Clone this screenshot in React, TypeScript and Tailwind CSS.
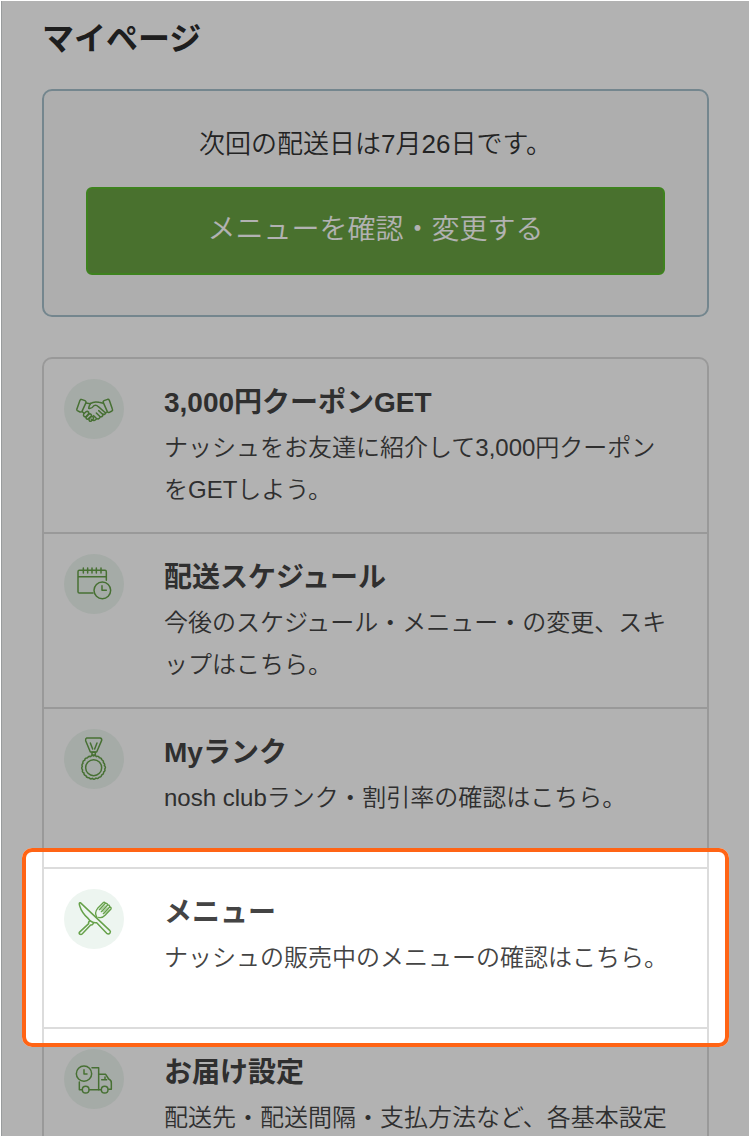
import type { ReactNode } from "react";

function Icon({ children }: { children: ReactNode }) {
  return (
    <svg
      viewBox="0 0 180 180"
      className="size-[60px] shrink-0 rounded-full bg-[#edf5f0]"
      fill="none"
      stroke="#66a14a"
      strokeWidth="4.5"
      strokeLinecap="round"
      strokeLinejoin="round"
      aria-hidden="true"
    >
      {children}
    </svg>
  );
}

const handshake = (
  <Icon>
    <path d="M52 61 L63 65 Q67 67 66 71 L54 97 Q52 100 48 99 L40 95 Q37 93 39 89 L48 64 Q50 60 52 61Z" />
    <path d="M131 61 L120 65 Q116 67 118 71 L130 98 Q132 102 136 100 L144 96 Q147 94 145 90 L136 64 Q134 60 131 61Z" />
    <path d="M66 72 L79 74 Q90 66 105 70 L118 73" />
    <path d="M80 73 Q74 82 74 88 Q82 91 90 80 Q97 77 103 83 L125 102 Q122 109 115 105 L104 95" />
    <path d="M117 106 Q116 116 107 112 L97 102" />
    <path d="M109 113 Q105 123 97 118 L89 110" />
    <path d="M55 98 L60 103 M127 100 L124 103 M98 119 Q91 129 82 121" />
    <path d="M66 98 L59 105 Q57 110 61 113 Q65 115 68 111 L74 104 Q75 98 70 97Z" />
    <path d="M76 104 L66 115 Q66 121 71 121 L82 111 Q84 105 76 104Z" />
    <path d="M83 112 L75 120 Q75 128 81 127 L88 120 Q90 112 83 112Z" />
  </Icon>
);

const calendar = (
  <Icon>
    <path d="M87 117 H46 Q42 117 42 113 V53 Q42 49 46 49 H123 Q127 49 127 53 V79 M42 68 H127" />
    <path d="M58 42 V57 M71 42 V57 M84 42 V57 M97 42 V57 M111 42 V57" />
    <circle cx="115" cy="109" r="25" />
    <path d="M114 95 V109 H127" />
  </Icon>
);

const medal = (
  <Icon>
    <path d="M68 27 H108 Q114 28 113 34 L98 69 H79 L65 35 Q64 28 68 27Z M79 42 L86 60 M99 42 L92 60" />
    <path d="M84 70 H94 V78 H84Z" />
    <circle cx="89" cy="116" r="24" />
    <path d="M89 81 Q94 77 97 83 Q104 80 106 86 Q113 86 113 92 Q120 95 118 101 Q124 105 121 110 Q127 115 122 120 Q125 126 119 129 Q120 136 113 138 Q112 145 105 145 Q101 151 96 147 Q90 154 85 148 Q79 152 75 146 Q67 147 66 140 Q59 139 60 132 Q53 129 56 123 Q51 118 55 112 Q52 106 57 103 Q55 96 62 94 Q63 86 70 87 Q74 80 80 83 Q84 77 89 81Z" />
  </Icon>
);

const cutlery = (
  <Icon>
    <path d="M49 41 Q44 40 47 50 Q53 71 73 89 Q84 103 98 101 L128 133 Q134 137 138 132 Q141 128 137 124Z" />
    <path d="M78 96 Q72 98 74 104 L46 130 Q44 135 49 136 Q52 137 55 134 L80 108 Q86 109 88 103" />
    <path
      d="M99 86 Q90 70 101 58 L119 40 Q123 39 124 43 L106 62 M124 43 Q130 42 131 48 L112 68 M131 48 Q137 47 137 54 L118 74 M137 54 Q143 55 141 60 L124 78 Q115 88 104 85"
      strokeWidth="4"
    />
    <path d="M123 50 L111 62 M129 56 L117 68 M135 62 L124 73" strokeWidth="2" />
  </Icon>
);

const truck = (
  <Icon>
    <circle cx="60" cy="74" r="23" />
    <path d="M60 62 V75 H69" />
    <path d="M84 56 H104 V122 H76 M46 99 V122 H53" />
    <path d="M104 76 H125 L134 90 Q143 94 142 102 V121 H134 M104 122 H111 M113 92 H123 V84 M113 92 H128" />
    <circle cx="65" cy="122" r="10" />
    <circle cx="122" cy="122" r="10" />
  </Icon>
);

type Entry = { title: string; text: string; icon: ReactNode; active?: boolean };

const entries: Entry[] = [
  { title: "3,000円クーポンGET", text: "ナッシュをお友達に紹介して3,000円クーポンをGETしよう。", icon: handshake },
  { title: "配送スケジュール", text: "今後のスケジュール・メニュー・の変更、スキップはこちら。", icon: calendar },
  { title: "Myランク", text: "nosh clubランク・割引率の確認はこちら。", icon: medal },
  { title: "メニュー", text: "ナッシュの販売中のメニューの確認はこちら。", icon: cutlery, active: true },
  { title: "お届け設定", text: "配送先・配送間隔・支払方法など、各基本設定", icon: truck },
];

export default function App() {
  return (
    <div className="h-screen overflow-hidden bg-white p-px font-['Liberation_Sans','Noto_Sans_CJK_JP',sans-serif]">
      <main lang="ja" className="h-full overflow-hidden border-l border-[#999c9d] bg-white px-10 pt-4 text-[#444]">
        <h1 className="text-[32px] leading-[44px] font-bold text-[#2b2b2b]">マイページ</h1>

        <section className="mt-7 rounded-[10px] border-2 border-[#a6c1cc] bg-[#fafafa] px-[42px] pt-8 pb-10 text-center">
          <p className="text-[26px] leading-[42px] font-[350] text-[#333]">次回の配送日は7月26日です。</p>
          <button
            type="button"
            className="mt-[22px] h-[88px] w-full rounded-[6px] border-2 border-[#5abb2c] bg-[#69a343] pb-0.5 text-[28px] font-[350] text-white"
          >
            メニューを確認・変更する
          </button>
        </section>

        <ul className="mt-10 rounded-[10px] border-2 border-[#dcdcdc]">
          {entries.map((entry) => (
            <li key={entry.title} className="relative border-[#dcdcdc] not-first:min-h-[160px] not-first:border-t-2">
              <a href="#" className="flex items-start gap-10 pt-5 pr-8 pb-[21px] pl-5">
                {entry.icon}
                <div className="min-w-0 flex-1">
                  <h2 className="text-[28px] leading-[48px] font-bold">{entry.title}</h2>
                  <p className="text-[24px] leading-[42px] font-[350]">{entry.text}</p>
                </div>
              </a>
              {entry.active && (
                <div className="pointer-events-none absolute -inset-x-[22px] -top-[21px] -bottom-5 z-10 rounded-[10px] border-4 border-[#ff6415] shadow-[0_0_0_2000px_rgba(0,0,0,0.3)]" />
              )}
            </li>
          ))}
        </ul>
      </main>
    </div>
  );
}
